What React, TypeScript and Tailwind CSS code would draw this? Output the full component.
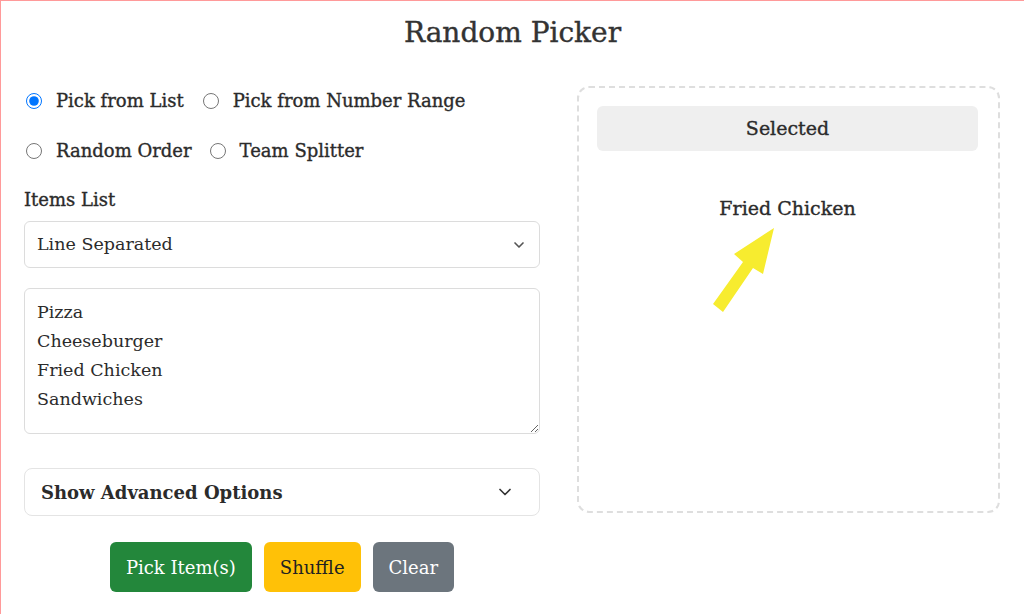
import { ChevronDown } from "lucide-react";

const font = { fontFamily: '"DejaVu Serif", serif' };

function Radio({ label, checked }: { label: string; checked?: boolean }) {
  return (
    <label className="flex h-6 items-center gap-[14px] text-[18px] leading-6 [-webkit-text-stroke:0.35px]">
      <input type="radio" name="mode" defaultChecked={checked} className="m-0 h-4 w-4 accent-[#0075ff]" />
      {label}
    </label>
  );
}

export default function App() {
  return (
    <main className="h-[614px] w-[1024px] overflow-hidden border-l border-t border-[#ff9a9a] bg-white text-[#2b2b2b]" style={font}>
      <h1 className="pt-[14px] text-center text-[28px] leading-9 text-[#333] [-webkit-text-stroke:0.4px]">Random Picker</h1>

      <div className="mt-[38px] flex gap-[37px] pl-[23px]">
        <section className="w-[516px]">
          <div className="flex gap-[19px] pl-[2px]">
            <Radio label="Pick from List" checked />
            <Radio label="Pick from Number Range" />
          </div>
          <div className="mt-[26px] flex gap-[18px] pl-[2px]">
            <Radio label="Random Order" />
            <Radio label="Team Splitter" />
          </div>

          <p className="mt-[25px] text-[18px] leading-6 [-webkit-text-stroke:0.35px]">Items List</p>
          <div className="mt-[9px] flex h-[47px] items-center justify-between rounded-md border border-[#dcdcdc] px-3 text-[17.5px]">
            <span>Line Separated</span>
            <ChevronDown className="h-4 w-4 text-[#555]" strokeWidth={2.5} />
          </div>

          <textarea
            className="mt-5 block h-[146px] w-full rounded-md border border-[#dcdcdc] px-3 py-[9px] text-[17.5px] leading-[29px] text-[#2b2b2b] outline-none"
            defaultValue={"Pizza\nCheeseburger\nFried Chicken\nSandwiches"}
          />

          <div className="mt-[34px] flex h-[48px] items-center justify-between rounded-lg border border-[#e4e4e4] pl-4 pr-[24px]">
            <span className="text-[18px] font-bold">Show Advanced Options</span>
            <ChevronDown className="h-5 w-5 text-[#333]" strokeWidth={2} />
          </div>

          <div className="mt-[26px] flex justify-center gap-3 text-[18px]">
            <button className="h-[50px] rounded-md bg-[#23873b] px-4 text-white">Pick Item(s)</button>
            <button className="h-[50px] rounded-md bg-[#ffc107] px-4 text-[#222]">Shuffle</button>
            <button className="h-[50px] rounded-md bg-[#6c757d] px-4 text-white">Clear</button>
          </div>
        </section>

        <section className="relative mt-[-3px] h-[427px] w-[423px] rounded-xl border-2 border-dashed border-[#dedede] pl-[18px] pr-[20px] pt-[18px]">
          <div className="flex h-[45px] items-center justify-center rounded-md bg-[#efefef] text-[19px] [-webkit-text-stroke:0.35px]">Selected</div>
          <p className="mt-[43px] text-center text-[19px] leading-7 [-webkit-text-stroke:0.35px]">Fried Chicken</p>
          <svg className="absolute left-[134px] top-[139px]" width="70" height="92" viewBox="0 0 70 92">
            <polygon fill="#f7ec2f" points="61,1 50,47 40,41 10,85 0,77 30,35 21,27" />
          </svg>
        </section>
      </div>
    </main>
  );
}
